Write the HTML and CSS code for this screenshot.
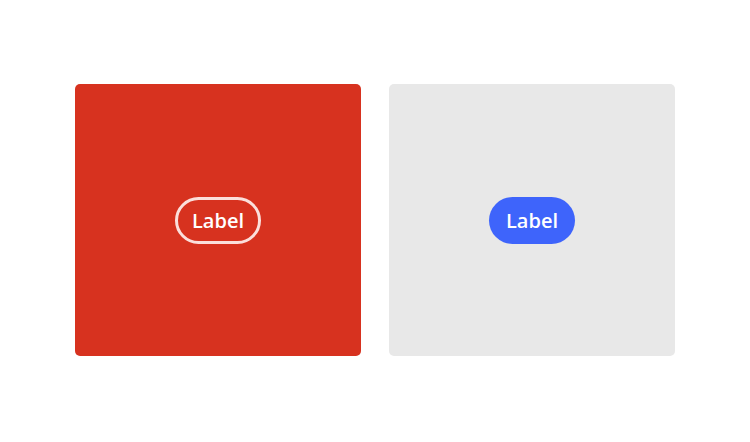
FILE: index.html
```html
<!DOCTYPE html>
<html lang="en">

<head>
    <meta charset="UTF-8">
    <meta name="viewport" content="width=device-width, initial-scale=1.0">
    <title>Buttons</title>
    <link rel="stylesheet" href="styles.css">
</head>

<body>
    <div class="stage">
        <div class="panel panel-red">
            <button class="btn btn-outline">Label</button>
        </div>
        <div class="panel panel-grey">
            <button class="btn btn-fill">Label</button>
        </div>
    </div>
</body>

</html>
```
FILE: styles.css
```css
body {
    margin: 0;
    background-color: #ffffff;
    font-family: "Open Sans", "Noto Sans", sans-serif;
}

.stage {
    display: flex;
    justify-content: center;
    gap: 28px;
    padding-top: 84px;
}

.panel {
    width: 286px;
    height: 272px;
    border-radius: 5px;
    display: flex;
    align-items: center;
    justify-content: center;
}

.panel-red {
    background-color: #d7321f;
}

.panel-grey {
    background-color: #e8e8e8;
}

.btn {
    box-sizing: border-box;
    width: 86px;
    height: 47px;
    border-radius: 24px;
    font-family: inherit;
    font-size: 20px;
    font-weight: 600;
    color: #ffffff;
    padding: 0;
    margin-top: 1px;
}

.btn-outline {
    background-color: transparent;
    border: 3px solid rgba(255, 242, 240, 0.9);
}

.btn-fill {
    background-color: #3e64fb;
    border: none;
}
```
